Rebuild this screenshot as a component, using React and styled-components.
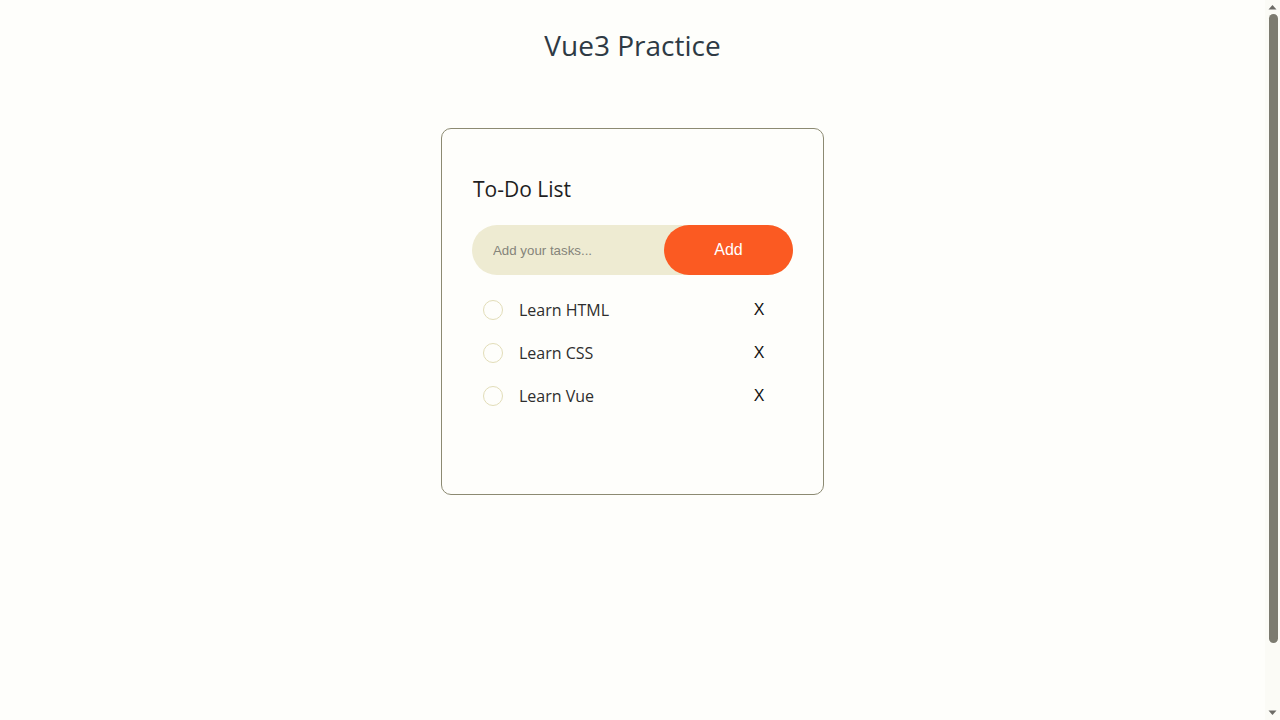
import React, { useState } from "react";
import styled, { createGlobalStyle } from "styled-components";

const Global = createGlobalStyle`
  html, body { margin: 0; padding: 0; background: #fefefb; overflow: hidden; }
  body { font-family: "Open Sans", "Noto Sans", sans-serif; }
  * { box-sizing: border-box; }
`;

const Window = styled.div`
  display: flex;
  height: 720px;
`;

const Page = styled.main`
  flex: 1;
  display: flex;
  flex-direction: column;
  align-items: center;
  padding-top: 26px;
`;

const ScrollTrack = styled.div`
  width: 15px;
  flex-shrink: 0;
  display: flex;
  flex-direction: column;
  align-items: center;
  background: #fbfbf6;
`;

const ArrowBox = styled.div`
  height: 14px;
  display: flex;
  align-items: center;
  justify-content: center;
`;

const Thumb = styled.div`
  width: 9px;
  height: 629px;
  margin-left: 1px;
  border-radius: 5px;
  background: #7c7b70;
`;

const Spacer = styled.div`
  flex: 1;
`;

const Title = styled.h1`
  margin: 0;
  font-size: 28px;
  line-height: 38px;
  font-weight: 400;
  color: #2e3a44;
`;

const Card = styled.div`
  margin-top: 64px;
  width: 383px;
  height: 367px;
  border: 1px solid #8c8a72;
  border-radius: 10px;
  padding: 48px 30px 0;
  display: flex;
  flex-direction: column;
`;

const CardTitle = styled.h2`
  margin: 0 0 24px 1px;
  font-size: 21px;
  line-height: 24px;
  font-weight: 400;
  color: #1f1f1f;
`;

const InputRow = styled.div`
  display: flex;
  align-items: center;
  height: 50px;
  border-radius: 25px;
  background: #eeebd2;
`;

const TaskInput = styled.input`
  flex: 1;
  min-width: 0;
  border: none;
  outline: none;
  background: transparent;
  padding-left: 21px;
  font-family: "Liberation Sans", Arial, sans-serif;
  font-size: 13.3px;
  color: #333;
  &::placeholder { color: #85847a; }
`;

const AddButton = styled.button`
  width: 129px;
  height: 50px;
  border: none;
  border-radius: 25px;
  background: #fb5a22;
  color: #fff;
  font-family: "Liberation Sans", Arial, sans-serif;
  font-size: 16px;
  cursor: pointer;
`;

const List = styled.ul`
  list-style: none;
  margin: 13px 0 0;
  padding: 0;
`;

const Item = styled.li`
  display: flex;
  align-items: center;
  height: 43px;
  padding-left: 11px;
  font-size: 16px;
  color: #2e2e2e;
`;

const Circle = styled.span`
  width: 20px;
  height: 20px;
  border-radius: 50%;
  border: 1px solid #e2ddb8;
  flex-shrink: 0;
  margin-right: 16px;
`;

const Label = styled.span`
  flex: 1;
`;

const Remove = styled.span`
  width: 40px;
  margin-right: 14px;
  text-align: center;
  font-family: "Liberation Sans", Arial, sans-serif;
  font-size: 16px;
  color: #111;
  cursor: pointer;
`;

const Arrow = ({ up }) => (
  <svg width="9" height="6" viewBox="0 0 9 6">
    <path d={up ? "M0.5 5.5 L4.5 1 L8.5 5.5 Z" : "M0.5 0.5 L4.5 5 L8.5 0.5 Z"} fill="#6c6b66" />
  </svg>
);

export default function App() {
  const [tasks] = useState(["Learn HTML", "Learn CSS", "Learn Vue"]);
  return (
    <>
      <Global />
      <Window>
        <Page>
          <Title>Vue3 Practice</Title>
          <Card>
            <CardTitle>To-Do List</CardTitle>
            <InputRow>
              <TaskInput placeholder="Add your tasks..." />
              <AddButton>Add</AddButton>
            </InputRow>
            <List>
              {tasks.map((t) => (
                <Item key={t}>
                  <Circle />
                  <Label>{t}</Label>
                  <Remove>X</Remove>
                </Item>
              ))}
            </List>
          </Card>
        </Page>
        <ScrollTrack>
          <ArrowBox><Arrow up /></ArrowBox>
          <Thumb />
          <Spacer />
          <ArrowBox><Arrow /></ArrowBox>
        </ScrollTrack>
      </Window>
    </>
  );
}
